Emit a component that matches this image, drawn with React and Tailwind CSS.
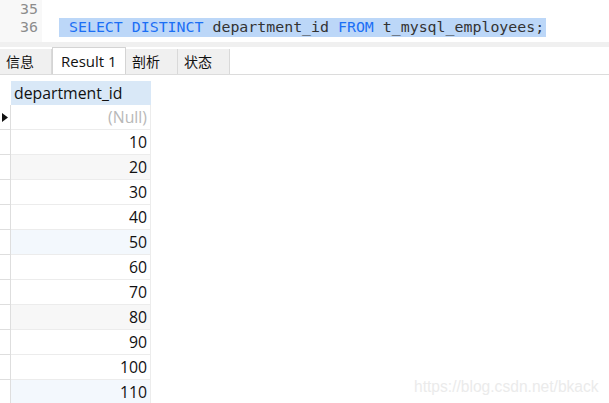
import React from 'react'

const rows = [null, 10, 20, 30, 40, 50, 60, 70, 80, 90, 100, 110]

const shade = (i) => {
  if (i % 3 !== 2) return 'bg-white'
  return i % 6 === 2 ? 'bg-[#f7f7f7]' : 'bg-[#f3f8fd]'
}

function Tab({ label, active, cjk }) {
  const font = cjk ? 'font-["Noto_Sans_CJK_SC",sans-serif] text-[14px]' : 'font-["Open_Sans",sans-serif] text-[15px]'
  if (active) {
    return (
      <div className={`h-[27px] w-[74px] px-[8px] flex items-center bg-white border border-b-0 border-[#d4d4d4] text-[#111] ${font}`}>
        {label}
      </div>
    )
  }
  return (
    <div className={`h-[25px] w-[52px] flex items-center pl-[6px] bg-[#f0f0f0] border-r border-[#d9d9d9] text-[#111] ${font}`}>
      {label}
    </div>
  )
}

export default function App() {
  return (
    <div className="w-[609px] h-[403px] overflow-hidden bg-white relative">
      {/* editor */}
      <div className="h-[42px] flex overflow-hidden font-['DejaVu_Sans_Mono',monospace] text-[14.9px]">
        <div className="w-[42px] bg-[#f8f8f8] text-right pr-[4px] text-[#8c8c8c]">
          <div className="h-[18px] leading-[18px]">35</div>
          <div className="h-[19px] leading-[19px]">36</div>
        </div>
        <div className="flex-1 mt-[-2px]">
          <div className="h-[18px]" />
          <div className="inline-block h-[19px] leading-[19px] ml-[17px] pl-[10px] pr-[2px] bg-[#bcd7f8] whitespace-pre">
            <span className="text-[#1b6ff5]">SELECT DISTINCT </span>
            <span className="text-[#333]">department_id </span>
            <span className="text-[#1b6ff5]">FROM </span>
            <span className="text-[#333]">t_mysql_employees;</span>
          </div>
        </div>
      </div>
      <div className="h-[5px] bg-[#f0f0f0]" />
      {/* tabs */}
      <div className="h-[28px] flex items-end border-b border-[#dcdcdc]">
        <Tab label="信息" cjk />
        <Tab label="Result 1" active />
        <Tab label="剖析" cjk />
        <Tab label="状态" cjk />
      </div>
      {/* grid */}
      <div className="mt-[6px] w-[151px] font-['Open_Sans',sans-serif] text-[15.8px]">
        <div className="flex h-[24px]">
          <div className="w-[11px]" />
          <div className="w-[140px] bg-[#d9e8f7] pl-[3px] leading-[24px] text-[#111]">department_id</div>
        </div>
        {rows.map((v, i) => (
          <div key={i} className="flex h-[25px]">
            <div className="w-[11px] border-r border-b border-[#dedede] flex items-center">
              {i === 0 && (
                <svg width="6" height="9" viewBox="0 0 6 9" className="ml-[2px]">
                  <path d="M0 0 L6 4.5 L0 9 Z" fill="#111" />
                </svg>
              )}
            </div>
            <div className={`w-[140px] border-r border-b border-[#ececec] text-right pr-[3px] leading-[24px] ${shade(i)} ${v === null ? 'text-[#b8b8b8]' : 'text-[#111]'}`}>
              {v === null ? '(Null)' : v}
            </div>
          </div>
        ))}
      </div>
      <div className="absolute left-[414px] top-[375px] text-[15.6px] text-[#ebebeb] font-['Liberation_Sans',sans-serif]">
        https://blog.csdn.net/bkack
      </div>
    </div>
  )
}
